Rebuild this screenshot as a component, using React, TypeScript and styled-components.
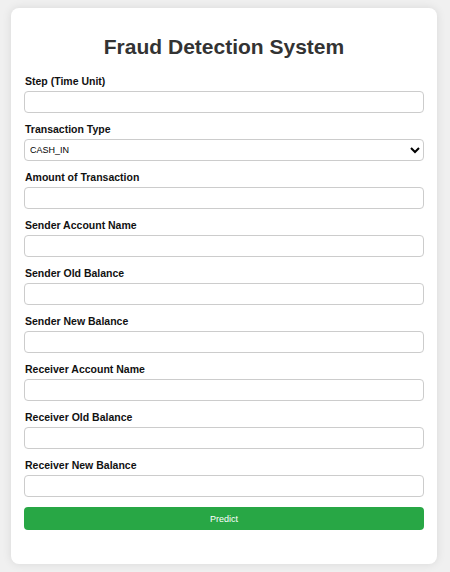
import React, { useState } from 'react';
import styled, { createGlobalStyle } from 'styled-components';

const GlobalStyle = createGlobalStyle`
  html, body {
    margin: 0;
    padding: 0;
    background: #f0f0f0;
    font-family: "Liberation Sans", Arial, sans-serif;
  }
  * {
    box-sizing: border-box;
  }
`;

const Page = styled.div`
  padding: 8px 13px 8px 11px;
`;

const Card = styled.form`
  background: #fff;
  border-radius: 8px;
  box-shadow: 0 0 10px rgba(0, 0, 0, 0.1);
  padding: 26px 13px 34px 13px;
`;

const Title = styled.h1`
  margin: 0 0 13px;
  text-align: center;
  color: #333;
  font-size: 21px;
  line-height: 26px;
  font-weight: bold;
`;

const Field = styled.div`
  display: flex;
  flex-direction: column;
  gap: 3px;
  margin-bottom: 8px;
`;

const Label = styled.label`
  font-size: 10.5px;
  line-height: 14px;
  padding-top: 1px;
  font-weight: bold;
  color: #111;
  padding-left: 1px;
`;

const Input = styled.input`
  width: 100%;
  height: 22px;
  border: 1px solid #ccc;
  border-radius: 4px;
  padding: 4px 6px;
  font-family: inherit;
  font-size: 9px;
  outline: none;
  background: #fff;
`;

const Select = styled.select`
  width: 100%;
  height: 22px;
  border: 1px solid #ccc;
  border-radius: 4px;
  padding: 0 1px;
  font-family: inherit;
  font-size: 9px;
  color: #000;
  background: #fff;
  outline: none;
`;

const Button = styled.button`
  width: 100%;
  height: 23px;
  margin-top: 2px;
  border: none;
  border-radius: 4px;
  background: #28a745;
  color: #fff;
  font-family: inherit;
  font-size: 9px;
  cursor: pointer;
`;

const fields = [
  'Amount of Transaction',
  'Sender Account Name',
  'Sender Old Balance',
  'Sender New Balance',
  'Receiver Account Name',
  'Receiver Old Balance',
  'Receiver New Balance',
];

const App: React.FC = () => {
  const [type, setType] = useState('CASH_IN');

  return (
    <Page>
      <GlobalStyle />
      <Card onSubmit={(e) => e.preventDefault()}>
        <Title>Fraud Detection System</Title>
        <Field>
          <Label>Step (Time Unit)</Label>
          <Input type="text" />
        </Field>
        <Field>
          <Label>Transaction Type</Label>
          <Select value={type} onChange={(e) => setType(e.target.value)}>
            <option>CASH_IN</option>
            <option>CASH_OUT</option>
            <option>DEBIT</option>
            <option>PAYMENT</option>
            <option>TRANSFER</option>
          </Select>
        </Field>
        {fields.map((f) => (
          <Field key={f}>
            <Label>{f}</Label>
            <Input type="text" />
          </Field>
        ))}
        <Button type="submit">Predict</Button>
      </Card>
    </Page>
  );
};

export default App;
